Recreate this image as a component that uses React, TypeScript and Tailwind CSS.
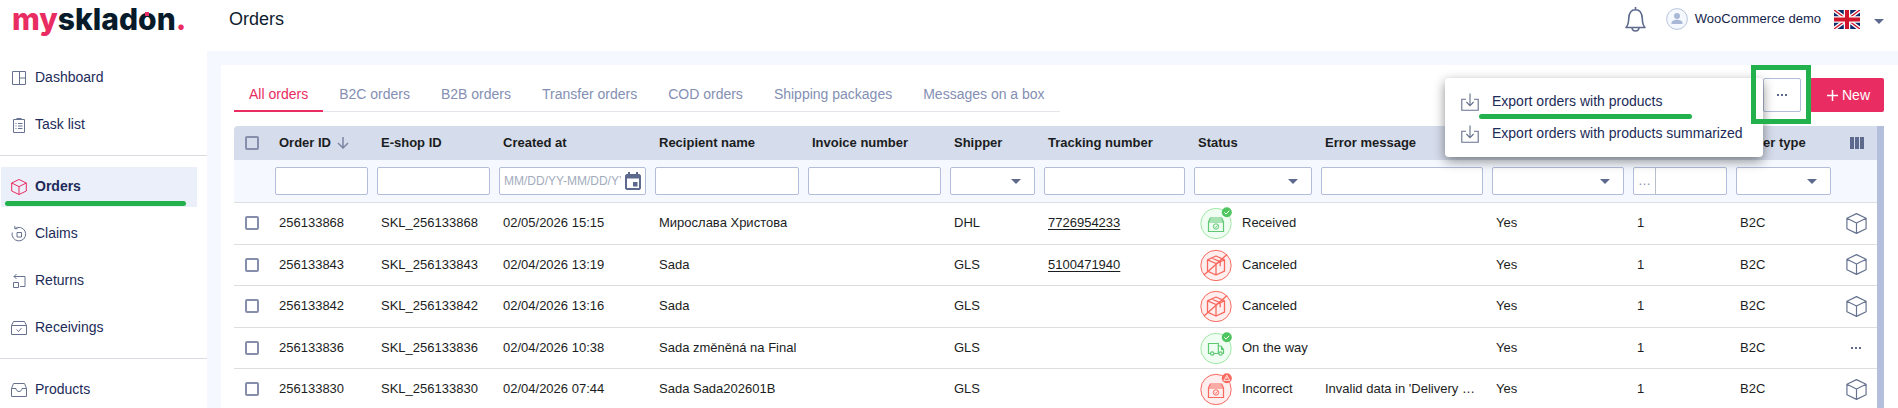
import type { ReactNode } from "react";

interface IOrder {
  id: string;
  created: string;
  recipient: string;
  shipper: string;
  tracking?: string;
  status: "Received" | "Canceled" | "On the way" | "Incorrect";
  error?: string;
}

interface IColumn {
  label: string;
  title?: string;
  width: string;
  filter: "text" | "date" | "select" | "number";
}

const orders: IOrder[] = [
  { id: "256133868", created: "02/05/2026 15:15", recipient: "Мирослава Христова", shipper: "DHL", tracking: "7726954233", status: "Received" },
  { id: "256133843", created: "02/04/2026 13:19", recipient: "Sada", shipper: "GLS", tracking: "5100471940", status: "Canceled" },
  { id: "256133842", created: "02/04/2026 13:16", recipient: "Sada", shipper: "GLS", status: "Canceled" },
  { id: "256133836", created: "02/04/2026 10:38", recipient: "Sada změněná na Final", shipper: "GLS", status: "On the way" },
  { id: "256133830", created: "02/04/2026 07:44", recipient: "Sada Sada202601B", shipper: "GLS", status: "Incorrect", error: "Invalid data in 'Delivery …" },
];

const columns: IColumn[] = [
  { label: "order", title: "Order ID", width: "w-[102px]", filter: "text" },
  { label: "eshop", title: "E-shop ID", width: "w-[122px]", filter: "text" },
  { label: "created", title: "Created at", width: "w-[156px]", filter: "date" },
  { label: "recipient", title: "Recipient name", width: "w-[153px]", filter: "text" },
  { label: "invoice", title: "Invoice number", width: "w-[142px]", filter: "text" },
  { label: "shipper", title: "Shipper", width: "w-[94px]", filter: "select" },
  { label: "tracking", title: "Tracking number", width: "w-[150px]", filter: "text" },
  { label: "status", title: "Status", width: "w-[127px]", filter: "select" },
  { label: "error", title: "Error message", width: "w-[171px]", filter: "text" },
  { label: "paid", width: "w-[141px]", filter: "select" },
  { label: "packages", width: "w-[103px]", filter: "number" },
  { label: "type", title: "Order type", width: "w-[104px]", filter: "select" },
];

const tabs = ["All orders", "B2C orders", "B2B orders", "Transfer orders", "COD orders", "Shipping packages", "Messages on a box"];

const Icon = ({ children, size = "size-4" }: { children: ReactNode; size?: string }) => (
  <svg viewBox="0 0 16 16" className={`${size} shrink-0`} fill="none" stroke="currentColor" aria-hidden="true">
    {children}
  </svg>
);

const Caret = ({ className = "" }: { className?: string }) => (
  <svg viewBox="0 0 10 5" className={`h-[5px] w-[10px] shrink-0 fill-[#5d6a8d] ${className}`} aria-hidden="true">
    <path d="M0 0h10L5 5z" />
  </svg>
);

const Box = () => (
  <path d="M8 .5 15.3 4v8L8 15.5.7 12V4zM.7 4 8 7.6 15.3 4M8 7.6v7.9" strokeLinejoin="round" />
);

const DashboardIcon = () => (
  <Icon>
    <path d="M1.5 1.5h13v13h-13zM8.5 1.5v13M8.5 8h6" />
  </Icon>
);

const TaskIcon = () => (
  <Icon>
    <path d="M2.5 2.5h11v13h-11z" />
    <path d="M5.5 2h5" strokeWidth="2" />
    <path d="M4.5 6.500h1M4.500 9h1M4.500 11.500h1M7 6.500h4.500M7 9h4.500M7 11.500h4.500" />
  </Icon>
);

const OrdersIcon = () => (
  <Icon>
    <Box />
  </Icon>
);

const ClaimsIcon = () => (
  <Icon>
    <path d="M4 2.500A6.800 6.800 0 1 1 1.200 9.500" />
    <path d="M1.200 9.500A7 7 0 0 1 1.300 6.500M3.800 0v2.700h2.900M6 6.500h4.500V11H6z" />
  </Icon>
);

const ReturnsIcon = () => (
  <Icon>
    <path d="M3 3.500h11v10H9M5.500 1 3 3.500 5.500 6M2.500 9.500h5v5h-5z" />
  </Icon>
);

const ReceivingsIcon = () => (
  <Icon>
    <path d="M.5 5.500h15v9H.500zM.500 5.500 2.500 1.500h11l2 4M5.500 9.500l2 2 3-3.500" />
  </Icon>
);

const ProductsIcon = () => (
  <Icon>
    <path d="M.5 6.500 2.500 1.500h11l2 5v8H.500zM.500 6.500H5c.3 4 5.700 4 6 0h4.500" />
  </Icon>
);

const ExportIcon = () => (
  <Icon size="size-[18px]">
    <path d="M4.500 5.500H.700v9.800h14.600V5.500h-3.800M8 .500v10.500M4.800 8 8 11.200 11.200 8" />
  </Icon>
);

const Logo = () => (
  <a href="#" className="relative flex font-['Inter'] text-[30px] leading-8 font-extrabold text-[#071b2a]">
    <span className="text-[#e92c62]">my</span>sklad
    <span className="relative">
      o
      <span className="absolute top-[9px] left-[7px] size-1 bg-[#e92c62]" />
    </span>
    n<span className="text-[#e92c62]">.</span>
  </a>
);

const BellIcon = () => (
  <svg viewBox="0 0 21 25" className="h-[25px] w-[21px]" fill="none" stroke="#5d6a8d" strokeWidth="1.6" aria-hidden="true">
    <path d="M10.500 0v3M1 20.500h19c-2-2-2.500-4-2.700-8.500C17.100 6 14.500 2.800 10.500 2.800S3.900 6 3.700 12C3.500 16.500 3 18.500 1 20.500z" strokeLinejoin="round" />
    <path d="M7 21c.5 4 6.500 4 7 0" />
  </svg>
);

const AvatarIcon = () => (
  <svg viewBox="0 0 22 22" className="size-[22px]" aria-hidden="true">
    <circle cx="11" cy="11" r="10.400" fill="#f5f8fd" stroke="#b8c4dc" />
    <circle cx="11" cy="8" r="3" fill="#a9b8d6" />
    <path d="M5.500 16v-1.200c0-4 11-4 11 0V16z" fill="#a9b8d6" />
  </svg>
);

const Flag = () => (
  <svg viewBox="0 0 26 19" className="h-[19px] w-[26px]" aria-hidden="true">
    <path fill="#0a2a6b" d="M0 0h26v19H0z" />
    <path stroke="#fff" strokeWidth="4" d="m0 0 26 19M26 0 0 19" />
    <path stroke="#cf142b" strokeWidth="1.400" d="m0 0 26 19M26 0 0 19" />
    <path stroke="#fff" strokeWidth="6.500" d="M13 0v19M0 9.500h26" />
    <path stroke="#cf142b" strokeWidth="4" d="M13 0v19M0 9.500h26" />
  </svg>
);

const StatusIcon = ({ status }: { status: IOrder["status"] }) => {
  const ok = status === "Received" || status === "On the way";
  return (
    <svg viewBox="0 0 32 32" className="size-8 shrink-0" fill="none" stroke={ok ? "#5fc873" : "#f8685e"} aria-hidden="true">
      <circle cx="16" cy="16.500" r="15.200" fill={ok ? "#effdf3" : "#ffeeee"} stroke={ok ? "#a0e8a5" : "#f8685e"} />
      {(status === "Received" || status === "Incorrect") && (
        <g>
          <path d="M8.500 15h15v9.500h-15zM8.500 15l1.800-4h11.400l1.800 4M10 13h12" strokeWidth="1.200" />
          <circle cx="16" cy="19.500" r="2.700" />
          <path d="m14.800 19.500 1 1 1.700-2" />
        </g>
      )}
      {status === "Canceled" && (
        <g>
          <path d="m16 7 8.500 3.800v11.400L16 26l-8.500-3.800V10.800zM7.500 10.800 16 14.500l8.500-3.700M16 14.500V26M11.500 9l8.700 3.700v4.500" strokeWidth="1.300" strokeLinejoin="round" />
          <path d="M4 26 27 5.500" strokeWidth="1.400" />
        </g>
      )}
      {status === "On the way" && (
        <g strokeWidth="1.200">
          <path d="M10.300 21.500H8.500v-10h9.800v10h-4.400M18.300 14h2.700l2.500 3.500v4h-1M21.500 14v3.500h2" />
          <circle cx="12.200" cy="21.500" r="1.700" />
          <circle cx="20.500" cy="21.500" r="1.700" />
        </g>
      )}
      {ok && (
        <g stroke="none">
          <circle cx="26.800" cy="5.200" r="5" fill="#4fc55f" />
          <path d="m24.300 5.300 1.800 1.800 3.200-3.400" stroke="#fff" />
        </g>
      )}
      {status === "Incorrect" && (
        <g stroke="none">
          <circle cx="26.800" cy="5.200" r="5" fill="#f8685e" />
          <path d="m26.800 2.200 3 5.200h-6zM26.800 4v2" stroke="#fff" strokeWidth=".8" />
        </g>
      )}
    </svg>
  );
};

const Dots = () => (
  <svg viewBox="0 0 12 2" className="h-0.5 w-3 fill-[#5d6a8d]" aria-hidden="true">
    <path d="M1 0h2v2H1zM5 0h2v2H5zM9 0h2v2H9z" />
  </svg>
);

const NavItem = ({ icon, label, active }: { icon: ReactNode; label: string; active?: boolean }) => (
  <a
    href="#"
    className={`relative ml-px mr-[10px] flex h-10 items-center gap-2 pl-[10px] text-[14px] ${
      active ? "bg-[#ebeff9] font-bold text-[#1c2b59]" : "text-[#1c2b59]"
    }`}
  >
    <span className={active ? "text-[#e92c62]" : "text-[#66728f]"}>{icon}</span>
    <span className="pb-[2px]">{label}</span>
    {active && <span className="absolute right-[11px] bottom-px left-1 h-[5px] rounded-sm bg-[#22b14c]" />}
  </a>
);

const Check = ({ label }: { label: string }) => (
  <input type="checkbox" aria-label={label} className="block size-[14px] appearance-none rounded-xs border-2 border-[#858fab]" />
);

const field = "h-7 w-full rounded-xs border border-[#b1bdd9] bg-white";

const Filter = ({ column }: { column: IColumn }) => {
  const label = `Filter by ${column.label}`;
  if (column.filter === "select") {
    return (
      <div className="relative">
        <select aria-label={label} className={`${field} block appearance-none`} />
        <Caret className="absolute top-3 right-[14px]" />
      </div>
    );
  }
  if (column.filter === "date") {
    return (
      <div className={`${field} flex items-center pr-1 pl-1`}>
        <input aria-label={label} placeholder="MM/DD/YY-MM/DD/YY" className="min-w-0 flex-1 text-[12px] outline-none placeholder:text-[#a3abbd]" />
        <svg viewBox="0 0 16 18" className="ml-1 h-[18px] w-4 shrink-0 fill-[#5d6a8d]" aria-hidden="true">
          <path fillRule="evenodd" d="M3 0h2v2h6V0h2v2h1.500L16 3.500v13L14.500 18h-13L0 16.500v-13L1.500 2H3zM2 6.500V16h12V6.500z" />
          <path d="M8 10h4.500v4.500H8z" />
        </svg>
      </div>
    );
  }
  if (column.filter === "number") {
    return (
      <div className={`${field} flex`}>
        <button aria-label="Comparison" className="w-[22px] border-r border-[#b9bfca] text-[#8a93a8]">
          …
        </button>
        <input aria-label={label} className="min-w-0 flex-1" />
      </div>
    );
  }
  return <input aria-label={label} className={`${field} block`} />;
};

const Header = () => (
  <header className="flex h-[51px] shrink-0 items-center bg-white pr-[14px] pb-[13px] pl-3">
    <div className="w-[217px]">
      <Logo />
    </div>
    <h1 className="flex-1 text-[18px] text-[#0e1c2f]">Orders</h1>
    <button aria-label="Notifications">
      <BellIcon />
    </button>
    <a href="#" className="ml-5 flex items-center gap-[7px] text-[13px] text-[#14244b]">
      <AvatarIcon />
      WooCommerce demo
    </a>
    <button aria-label="Language" className="ml-[13px] flex items-center gap-[14px]">
      <Flag />
      <Caret className="mt-1" />
    </button>
  </header>
);

const Sidebar = () => (
  <nav className="w-[207px] shrink-0 bg-white pt-[7px]">
    <div className="flex flex-col gap-[7px] border-b border-[#d9dbe0] pb-[10px]">
      <NavItem icon={<DashboardIcon />} label="Dashboard" />
      <NavItem icon={<TaskIcon />} label="Task list" />
    </div>
    <div className="flex flex-col gap-[7px] border-b border-[#d9dbe0] pt-[11px] pb-[10px]">
      <NavItem icon={<OrdersIcon />} label="Orders" active />
      <NavItem icon={<ClaimsIcon />} label="Claims" />
      <NavItem icon={<ReturnsIcon />} label="Returns" />
      <NavItem icon={<ReceivingsIcon />} label="Receivings" />
    </div>
    <div className="pt-[11px]">
      <NavItem icon={<ProductsIcon />} label="Products" />
    </div>
  </nav>
);

const ExportItem = ({ label }: { label: string }) => (
  <button className="flex h-8 items-center gap-[13px] pl-4 text-[14px] whitespace-nowrap text-[#1c2b59]">
    <span className="text-[#66728f]">
      <ExportIcon />
    </span>
    <span className="pb-[2px]">{label}</span>
  </button>
);

const ExportMenu = () => (
  <ul className="absolute top-0 right-full z-10 w-[318px] rounded bg-white pt-2 pb-[7px] shadow-[0_4px_12px_rgba(0,0,0,0.45)]">
    <li className="relative">
      <ExportItem label="Export orders with products" />
      <span className="absolute -bottom-px left-[34px] h-[5px] w-[213px] rounded-sm bg-[#22b14c]" />
    </li>
    <li>
      <ExportItem label="Export orders with products summarized" />
    </li>
  </ul>
);

const Toolbar = () => (
  <div className="flex items-start justify-between">
    <div role="tablist" className="flex h-[34px] gap-px border-b border-[#e3e5ea]">
      {tabs.map((tab, index) => (
        <button
          key={tab}
          role="tab"
          aria-selected={index === 0}
          className={`-mb-px border-b-2 px-[15px] text-[14px] whitespace-nowrap ${
            index === 0 ? "border-[#e92c62] text-[#e92c62]" : "border-transparent text-[#848fb3]"
          }`}
        >
          {tab}
        </button>
      ))}
    </div>
    <div className="flex">
      <div className="relative">
        <button aria-label="More actions" className="flex h-[34px] w-[38px] items-center justify-center rounded-xs border border-[#b1bdd9]">
          <Dots />
        </button>
        <ExportMenu />
        <span className="pointer-events-none absolute -top-[13px] -left-3 z-20 h-[59px] w-[60px] border-5 border-[#22b14c]" />
      </div>
      <button className="ml-[9px] flex h-[34px] w-[74px] items-center justify-end gap-1 rounded-xs bg-[#e92c62] pr-[14px] text-[14px] text-white">
        <svg viewBox="0 0 11 11" className="size-[11px]" stroke="#fff" strokeWidth="1.500" aria-hidden="true">
          <path d="M5.500 0v11M0 5.500h11" />
        </svg>
        New
      </button>
    </div>
  </div>
);

const Row = ({ order }: { order: IOrder }) => (
  <tr className="border-b border-[#dcdee2] odd:h-[42px] even:h-[41px] [&>td]:pl-2">
    <td>
      <div className="pl-[3px]">
        <Check label={`Select order ${order.id}`} />
      </div>
    </td>
    <td>{order.id}</td>
    <td>SKL_{order.id}</td>
    <td>{order.created}</td>
    <td>{order.recipient}</td>
    <td />
    <td>{order.shipper}</td>
    <td>
      {order.tracking && (
        <a href="#" className="underline underline-offset-2">
          {order.tracking}
        </a>
      )}
    </td>
    <td>
      <div className="flex items-center gap-[10px] pl-[2px]">
        <StatusIcon status={order.status} />
        {order.status}
      </div>
    </td>
    <td>{order.error}</td>
    <td>Yes</td>
    <td>1</td>
    <td>B2C</td>
    <td>
      <button aria-label="Order detail" className="flex w-6 justify-center text-[#66728f]">
        {order.status === "On the way" ? (
          <Dots />
        ) : (
          <svg viewBox="0 0 16 16" className="size-[21px]" fill="none" stroke="currentColor" strokeWidth=".9" aria-hidden="true">
            <Box />
          </svg>
        )}
      </button>
    </td>
  </tr>
);

const OrdersTable = () => (
  <div className="mt-[14px] flex min-h-0 flex-1 overflow-hidden rounded-tl border-r-7 border-[#b3bfdb]">
    <table className="w-full table-fixed self-start text-left text-[13px] whitespace-nowrap text-[#1b1d22]">
      <thead>
        <tr className="h-[34px] bg-[#d5dceb]">
          <th className="w-[37px] pl-[11px]">
            <Check label="Select all orders" />
          </th>
          {columns.map((column, index) => (
            <th key={column.label} className={`${column.width} pl-2`}>
              <div className="flex items-center gap-[6px]">
                {column.title}
                {index === 0 && (
                  <svg viewBox="0 0 12 12" className="size-3" fill="none" stroke="#7b86a3" strokeWidth="1.500" aria-hidden="true">
                    <path d="M6 0v11M1 6l5 5 5-5" />
                  </svg>
                )}
              </div>
            </th>
          ))}
          <th className="w-[41px] pl-[14px]">
            <svg viewBox="0 0 14 12" className="h-3 w-[14px] fill-[#5d6a8d]" aria-label="Columns">
              <path d="M0 0h4v12H0zM5 0h4v12H5zM10 0h4v12h-4z" />
            </svg>
          </th>
        </tr>
        <tr className="h-[42px] border-b border-[#dcdee2] bg-[#f5f9ff]">
          <td />
          {columns.map((column) => (
            <td key={column.label} className="pr-[5px] pl-1">
              <Filter column={column} />
            </td>
          ))}
          <td />
        </tr>
      </thead>
      <tbody>
        {orders.map((order) => (
          <Row key={order.id} order={order} />
        ))}
      </tbody>
    </table>
  </div>
);

export default function App() {
  return (
    <div className="flex h-screen flex-col overflow-hidden bg-white font-['Liberation_Sans',Arial,sans-serif]">
      <Header />
      <div className="flex min-h-0 flex-1">
        <Sidebar />
        <main className="flex min-w-0 flex-1 flex-col bg-[#f5f9ff] pt-[14px] pl-[14px]">
          <section className="flex min-h-0 flex-1 flex-col bg-white pt-[13px] pr-[14px] pl-[13px]">
            <Toolbar />
            <OrdersTable />
          </section>
        </main>
      </div>
    </div>
  );
}
